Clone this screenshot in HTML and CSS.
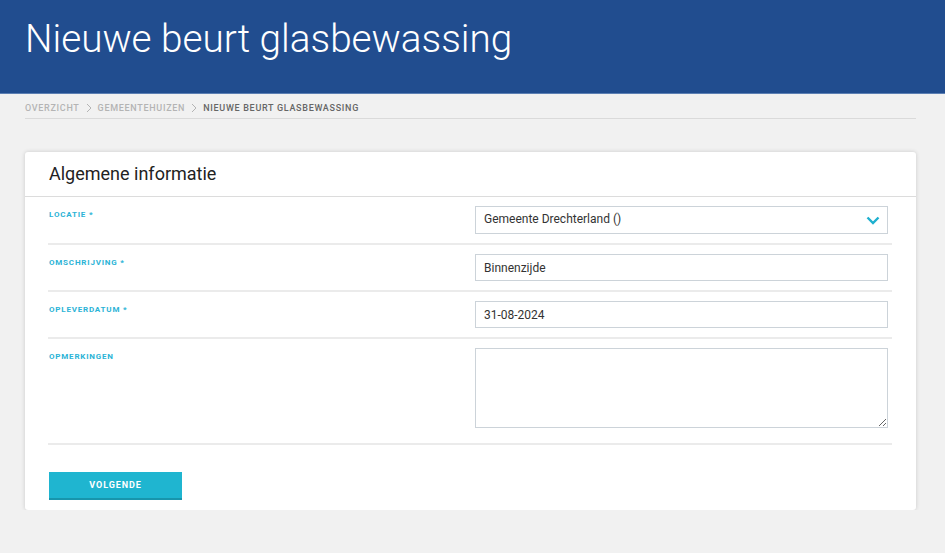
FILE: index.html
```html
<!DOCTYPE html>
<html lang="nl">
<head>
    <meta charset="UTF-8">
    <meta name="viewport" content="width=device-width, initial-scale=1.0">
    <title>Nieuwe beurt glasbewassing</title>
    <link rel="stylesheet" href="styles.css">
</head>
<body>

    <header class="page-header">
        <h1>Nieuwe beurt glasbewassing</h1>
    </header>

    <nav class="breadcrumb">
        <a href="#">Overzicht</a>
        <svg class="sep" width="6" height="10" viewBox="0 0 6 10"><path d="M1 1 L5 5 L1 9" fill="none" stroke="#b4b4b4" stroke-width="1"/></svg>
        <a href="#">Gemeentehuizen</a>
        <svg class="sep" width="6" height="10" viewBox="0 0 6 10"><path d="M1 1 L5 5 L1 9" fill="none" stroke="#b4b4b4" stroke-width="1"/></svg>
        <span class="current">Nieuwe beurt glasbewassing</span>
    </nav>

    <div class="card">
        <h2 class="card-title">Algemene informatie</h2>
        <form class="card-body">
            <div class="form-row">
                <label for="locatie">Locatie *</label>
                <div class="select-wrap">
                    <select id="locatie">
                        <option>Gemeente Drechterland ()</option>
                    </select>
                    <svg class="chevron" width="14" height="9" viewBox="0 0 14 9">
                        <path d="M1.5 1.5 L7 7 L12.5 1.5" fill="none" stroke="#1fb0cf" stroke-width="2.4"/>
                    </svg>
                </div>
            </div>
            <div class="form-row">
                <label for="omschrijving">Omschrijving *</label>
                <input type="text" id="omschrijving" value="Binnenzijde">
            </div>
            <div class="form-row">
                <label for="opleverdatum">Opleverdatum *</label>
                <input type="text" id="opleverdatum" value="31-08-2024">
            </div>
            <div class="form-row">
                <label for="opmerkingen">Opmerkingen</label>
                <textarea id="opmerkingen"></textarea>
            </div>
            <button type="button" class="next-button">Volgende</button>
        </form>
    </div>

</body>
</html>
```

FILE: styles.css
```css
/* Global Styles */
* {
    margin: 0;
    padding: 0;
    box-sizing: border-box;
}

body {
    font-family: Roboto, "Liberation Sans", sans-serif;
    background-color: #f1f1f1;
    color: #333;
}

/* Header */
.page-header {
    background-color: #214d8f;
    height: 94px;
    padding: 16px 25px 0;
    border-bottom: 1px solid #5c7fb3;
}

.page-header h1 {
    font-weight: 300;
    font-size: 38.7px;
    color: #ffffff;
}

/* Breadcrumb */
.breadcrumb {
    margin: 0 29px 0 25px;
    padding: 9px 0 5px;
    border-bottom: 1px solid #dadada;
    font-size: 9px;
    font-weight: 500;
    letter-spacing: 0.7px;
    text-transform: uppercase;
    display: flex;
    align-items: center;
    gap: 6px;
}

.breadcrumb a {
    color: #b4b4b4;
    text-decoration: none;
}

.breadcrumb .current {
    color: #666;
}

/* Card */
.card {
    background: #ffffff;
    margin: 33px 29px 0 25px;
    border-radius: 3px;
    box-shadow: 0 0 4px rgba(0, 0, 0, 0.16);
}

.card-title {
    font-size: 18px;
    font-weight: 400;
    color: #222;
    padding: 11px 24px 0;
    height: 45px;
    border-bottom: 1px solid #dcdcdc;
}

.card-body {
    padding: 0 24px 10px 23px;
}

/* Form Rows */
.form-row {
    display: grid;
    grid-template-columns: 427px 1fr;
    padding: 9px 4px 9px 0;
    border-bottom: 2px solid #ebebeb;
}

label {
    font-size: 8px;
    font-weight: 700;
    color: #2bb3d6;
    text-transform: uppercase;
    letter-spacing: 0.8px;
    padding: 4px 0 0 1px;
}

input,
select,
textarea {
    font-family: Roboto, "Liberation Sans", sans-serif;
    font-size: 12px;
    color: #333;
    border: 1px solid #ccd3d9;
    border-radius: 0;
    background: #ffffff;
    outline: none;
    width: 100%;
}

input {
    height: 27px;
    padding: 0 8px;
}

.select-wrap {
    position: relative;
}

select {
    height: 28px;
    padding: 0 8px 2px;
    appearance: none;
}

.chevron {
    position: absolute;
    right: 8px;
    top: 10px;
    pointer-events: none;
}

textarea {
    height: 80px;
    resize: vertical;
    margin-bottom: 6px;
}

/* Next Button */
.next-button {
    margin: 27px 0 0 1px;
    width: 133px;
    height: 28px;
    background-color: #1fb5d0;
    color: #ffffff;
    font-family: Roboto, "Liberation Sans", sans-serif;
    font-size: 9px;
    font-weight: 700;
    letter-spacing: 0.9px;
    text-transform: uppercase;
    border: none;
    border-bottom: 2px solid #1795ac;
    cursor: pointer;
}

.next-button:hover {
    background-color: #1aa3bc;
}
```
